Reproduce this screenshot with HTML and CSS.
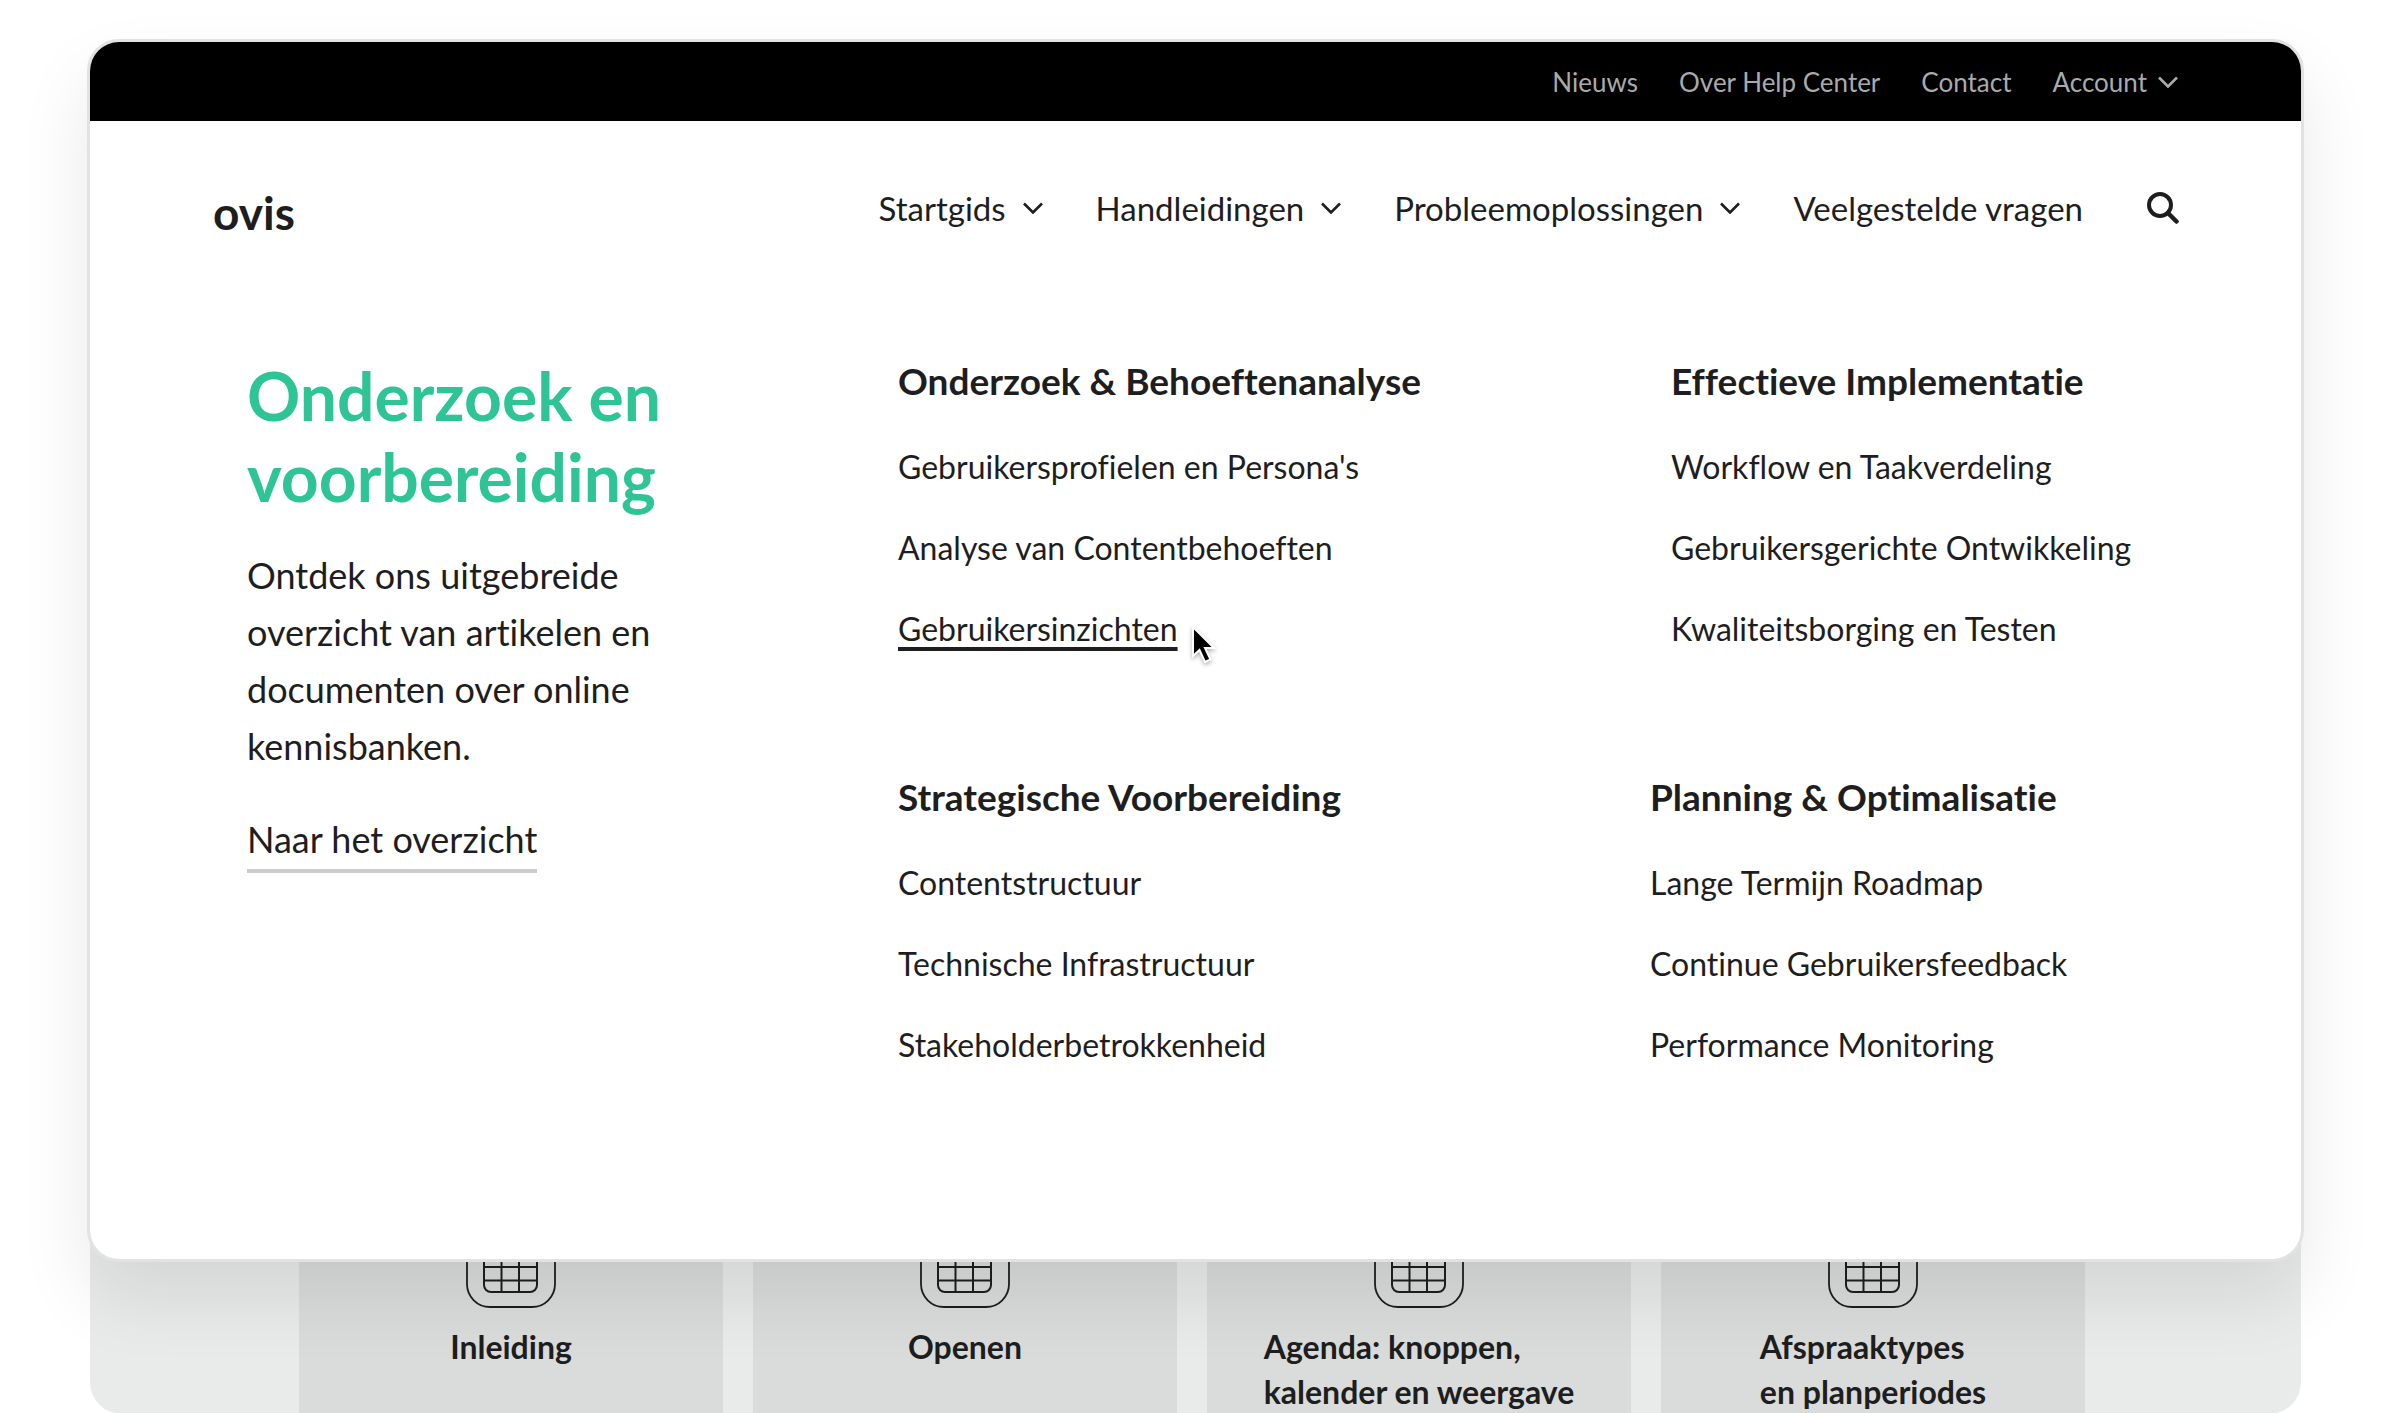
FILE: index.html
```html
<!DOCTYPE html>
<html lang="nl">
<head>
<meta charset="utf-8">
<title>ovis Help Center</title>
<link rel="stylesheet" href="styles.css">
</head>
<body>
<svg class="sprite" aria-hidden="true">
  <symbol id="chevron" viewBox="0 0 22 12"><path d="M2 1.500 11 10.500 20 1.500" fill="none" stroke="currentColor" stroke-width="2.600"/></symbol>
  <symbol id="calendar" viewBox="0 0 90 90">
    <g fill="none" stroke="currentColor" stroke-width="2">
      <rect x="1" y="1" width="88" height="88" rx="23" stroke-width="1.800"/>
      <rect x="18" y="18" width="53" height="56" rx="7"/>
      <path d="M18 35.500H71M18 49H71M18 62.500H71M35.500 35.500V74M53 35.500V74"/>
    </g>
  </symbol>
</svg>
<header class="panel">
  <nav class="topbar" aria-label="Service">
    <a href="#">Nieuws</a>
    <a href="#">Over Help Center</a>
    <a href="#">Contact</a>
    <button type="button">Account <svg class="chevron"><use href="#chevron"/></svg></button>
  </nav>
  <div class="header">
    <a class="logo" href="#">ovis</a>
    <nav class="nav" aria-label="Hoofdmenu">
      <button type="button">Startgids <svg class="chevron"><use href="#chevron"/></svg></button>
      <button type="button">Handleidingen <svg class="chevron"><use href="#chevron"/></svg></button>
      <button type="button">Probleemoplossingen <svg class="chevron"><use href="#chevron"/></svg></button>
      <a href="#">Veelgestelde vragen</a>
      <button class="search" type="button" aria-label="Zoeken">
        <svg viewBox="0 0 32 32"><circle cx="13" cy="13" r="11" fill="none" stroke="currentColor" stroke-width="4"/><path d="M21 21 29.500 29.500" stroke="currentColor" stroke-width="4.500" stroke-linecap="round"/></svg>
      </button>
    </nav>
  </div>
  <div class="mega">
    <section class="intro">
      <h1>Onderzoek en voorbereiding</h1>
      <p>Ontdek ons uitgebreide overzicht van artikelen en documenten over online kennisbanken.</p>
      <a href="#">Naar het overzicht</a>
    </section>
    <div class="groups">
      <div class="row row-wide">
        <section class="group">
          <h2>Onderzoek &amp; Behoeftenanalyse</h2>
          <ul>
            <li><a href="#">Gebruikersprofielen en Persona's</a></li>
            <li><a href="#">Analyse van Contentbehoeften</a></li>
            <li><a class="active" href="#">Gebruikersinzichten</a><svg class="cursor" viewBox="0 0 28 42"><path d="M4 3V32L10.500 26 16 38 21.500 35.500 16 24H25Z" fill="#000" stroke="#fff" stroke-width="2"/></svg></li>
          </ul>
        </section>
        <section class="group">
          <h2>Effectieve Implementatie</h2>
          <ul>
            <li><a href="#">Workflow en Taakverdeling</a></li>
            <li><a href="#">Gebruikersgerichte Ontwikkeling</a></li>
            <li><a href="#">Kwaliteitsborging en Testen</a></li>
          </ul>
        </section>
      </div>
      <div class="row">
        <section class="group">
          <h2>Strategische Voorbereiding</h2>
          <ul>
            <li><a href="#">Contentstructuur</a></li>
            <li><a href="#">Technische Infrastructuur</a></li>
            <li><a href="#">Stakeholderbetrokkenheid</a></li>
          </ul>
        </section>
        <section class="group">
          <h2>Planning &amp; Optimalisatie</h2>
          <ul>
            <li><a href="#">Lange Termijn Roadmap</a></li>
            <li><a href="#">Continue Gebruikersfeedback</a></li>
            <li><a href="#">Performance Monitoring</a></li>
          </ul>
        </section>
      </div>
    </div>
  </div>
</header>
<main class="cards">
  <a class="card" href="#"><svg class="calendar"><use href="#calendar"/></svg><span>Inleiding</span></a>
  <a class="card" href="#"><svg class="calendar"><use href="#calendar"/></svg><span>Openen</span></a>
  <a class="card" href="#"><svg class="calendar"><use href="#calendar"/></svg><span>Agenda: knoppen,<br>kalender en weergave</span></a>
  <a class="card" href="#"><svg class="calendar"><use href="#calendar"/></svg><span>Afspraaktypes<br>en planperiodes</span></a>
</main>
</body>
</html>
```
FILE: styles.css
```css
* { box-sizing: border-box; }

body {
  display: flex;
  flex-direction: column;
  min-height: 100vh;
  margin: 0;
  padding: 39px 87px 0;
  background: #fff;
  color: #1e1e1e;
  font-family: Lato, "Liberation Sans", sans-serif;
  font-variant-ligatures: none;
}

h1, h2, p, ul { margin: 0; padding: 0; }
ul { list-style: none; }
a { color: inherit; text-decoration: none; }
button {
  display: flex;
  align-items: center;
  padding: 0;
  border: 0;
  background: none;
  color: inherit;
  font: inherit;
}

.sprite { position: absolute; width: 0; height: 0; }
.chevron { display: block; width: 22px; height: 12px; }

.panel {
  position: relative;
  z-index: 1;
  overflow: hidden;
  border: 3px solid #e1e2e1;
  border-radius: 32px;
  background: #fff;
  background-clip: padding-box;
  box-shadow: 0 36px 72px rgba(0, 0, 0, 0.09);
}

.topbar {
  display: flex;
  justify-content: flex-end;
  align-items: center;
  gap: 41px;
  height: 79px;
  padding-right: 122px;
  background: #000;
  color: #aaa;
  font-size: 26px;
}
.topbar button { gap: 10px; }

.header {
  display: flex;
  justify-content: space-between;
  align-items: center;
  height: 174px;
  padding: 0 122px 0 123px;
}
.logo {
  padding-top: 8px;
  font-size: 46px;
  font-weight: 700;
}
.nav {
  display: flex;
  align-items: center;
  gap: 52px;
  font-size: 33px;
}
.nav button { gap: 16px; }
.nav .search { margin-left: 12px; }
.search svg { display: block; width: 32px; height: 32px; }

.mega {
  display: flex;
  padding: 60px 157px 194px;
}
.intro { width: 651px; }
.intro h1 {
  width: 440px;
  color: #2fc495;
  font-size: 66px;
  font-weight: 700;
  line-height: 81px;
}
.intro p {
  width: 440px;
  margin: 30px 0 40px;
  font-size: 36px;
  line-height: 57px;
}
.intro a {
  display: inline-block;
  padding-bottom: 6px;
  border-bottom: 4px solid #ccc;
  font-size: 36px;
  line-height: 48px;
}

.groups {
  display: grid;
  flex: 1;
  gap: 124px;
  padding-top: 2px;
}
.row {
  display: grid;
  grid-template-columns: 752px 1fr;
}
.row-wide { grid-template-columns: 773px 1fr; }
.group h2 {
  margin-bottom: 42px;
  font-size: 37px;
  font-weight: 700;
  line-height: 48px;
  white-space: nowrap;
}
.group ul {
  display: grid;
  gap: 41px;
  font-size: 32px;
  line-height: 40px;
  white-space: nowrap;
}
.group li { position: relative; justify-self: start; }
.active {
  text-decoration: underline 4px;
  text-underline-offset: 6px;
}
.cursor {
  position: absolute;
  top: 15px;
  left: calc(100% + 11px);
  width: 28px;
  height: 42px;
  filter: drop-shadow(0 2px 2px rgba(0, 0, 0, 0.3));
}

.cards {
  display: grid;
  grid-template-columns: repeat(4, 1fr);
  flex: 1;
  gap: 30px;
  overflow: hidden;
  margin: -60px 3px 0;
  padding: 0 216px 0 209px;
  border-radius: 0 0 32px 32px;
  background: #e8ebea;
}
.card {
  display: flex;
  flex-direction: column;
  align-items: center;
  gap: 16px;
  padding-top: 16px;
  background: #dadcdb;
  font-size: 32px;
  font-weight: 700;
  line-height: 45px;
}
.calendar { width: 90px; height: 90px; }
```
